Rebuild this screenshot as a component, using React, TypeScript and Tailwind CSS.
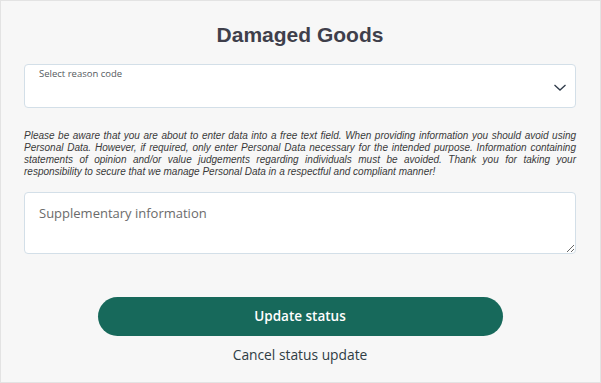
import React from 'react';

const DamagedGoods: React.FC = () => {
  return (
    <div className="w-[601px] h-[383px] bg-[#f7f7f7] border border-[#e3e3e3] box-border overflow-hidden">
      <div className="pl-[23px] pr-[24px] pt-[21px] flex flex-col">
        {/* Title */}
        <h1 className="text-center text-[21px] leading-[25px] font-bold text-[#3f3f4b] font-['Liberation_Sans',Arial,sans-serif]">
          Damaged Goods
        </h1>

        {/* Reason code select */}
        <div className="mt-[17px] h-[44px] bg-white border border-[#d3dfe8] rounded-[4px] relative font-['Open_Sans',sans-serif]">
          <span className="absolute left-[14px] top-[2px] text-[9.5px] leading-[14px] text-[#555a60]">
            Select reason code
          </span>
          <svg
            className="absolute right-[8px] top-[18px] w-[14px] h-[9px] text-[#2f3b4a]"
            viewBox="0 0 14 9"
            fill="none"
            stroke="currentColor"
            strokeWidth="1.3"
          >
            <path d="M1.5 2l5.5 5 5.5-5" />
          </svg>
        </div>

        {/* Disclaimer */}
        <p className="mt-[22px] text-[10px] leading-[12px] italic text-justify text-[#3a3a3a] font-['Liberation_Sans',Arial,sans-serif]">
          Please be aware that you are about to enter data into a free text field. When providing information you should avoid using
          Personal Data. However, if required, only enter Personal Data necessary for the intended purpose. Information containing
          statements of opinion and/or value judgements regarding individuals must be avoided. Thank you for taking your
          responsibility to secure that we manage Personal Data in a respectful and compliant manner!
        </p>

        {/* Supplementary textarea */}
        <textarea
          className="mt-[14px] h-[62px] w-full bg-white border border-[#d3dfe8] rounded-[4px] px-[14px] pt-[11px] text-[13px] leading-[18px] text-[#333] placeholder:text-[#6b6b6b] font-['Open_Sans',sans-serif] outline-none"
          placeholder="Supplementary information"
        />

        {/* Actions */}
        <div className="flex flex-col items-center mt-[43px] font-['Open_Sans',sans-serif]">
          <button className="w-[405px] h-[39px] rounded-full bg-[#17695b] text-white text-[13.5px] font-semibold">
            Update status
          </button>
          <button className="mt-[9px] text-[13.8px] leading-[20px] text-[#2f3d44]">
            Cancel status update
          </button>
        </div>
      </div>
    </div>
  );
};

export default function App() {
  return <DamagedGoods />;
}
